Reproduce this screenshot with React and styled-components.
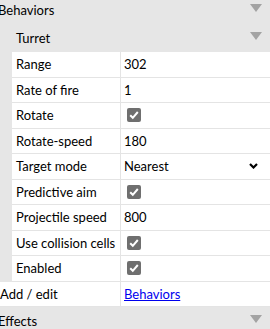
import React from "react";
import styled, { createGlobalStyle } from "styled-components";

const Global = createGlobalStyle`
  html, body { margin: 0; padding: 0; background: #e6e6e6; overflow: hidden; }
  body { font-family: Lato, "Open Sans", sans-serif; font-size: 13px; color: #000; }
`;

const Panel = styled.div`
  width: 270px;
  height: 329px;
  overflow: hidden;
  background: #e6e6e6;
  display: flex;
  flex-direction: column;
`;

const Header = styled.div`
  flex: none;
  height: 28px;
  margin-top: ${(p) => p.$offset || 0}px;
  display: flex;
  align-items: center;
  padding-left: ${(p) => p.$indent}px;
  position: relative;
  background: #e6e6e6;
`;

const HeaderText = styled.span`
  margin-left: ${(p) => p.$shift || 0}px;
`;

const Triangle = styled.span`
  position: absolute;
  right: 8px;
  top: 8px;
  width: 0;
  height: 0;
  border-left: 6px solid transparent;
  border-right: 6px solid transparent;
  border-top: 8px solid #a3a3a3;
`;

const Row = styled.div`
  flex: none;
  height: 25.5px;
  display: flex;
  padding-left: ${(p) => p.$indent}px;
  box-sizing: border-box;
`;

const Label = styled.div`
  width: ${(p) => 121 - p.$indent}px;
  flex: none;
  box-sizing: border-box;
  background: #fff;
  border-right: 1px solid #e4e4e4;
  border-bottom: 1px solid #e4e4e4;
  display: flex;
  align-items: center;
  padding-left: ${(p) => p.$pad}px;
  white-space: nowrap;
  overflow: hidden;
`;

const Value = styled.div`
  flex: 1;
  background: #fff;
  border-bottom: 1px solid #e4e4e4;
  display: flex;
  align-items: center;
  padding-left: 3px;
  padding-right: 12px;
  justify-content: space-between;
`;

const Check = styled.span`
  width: 14px;
  height: 14px;
  margin-left: 3px;
  border-radius: 2px;
  background: #6f6f6f;
  display: inline-flex;
  align-items: center;
  justify-content: center;
`;

const Link = styled.a`
  color: #0000ee;
  text-decoration: underline;
  cursor: pointer;
`;

const Checkbox = () => (
  <Check>
    <svg width="12" height="12" viewBox="0 0 12 12">
      <path d="M2.2 6.2 L4.8 8.8 L9.8 3" fill="none" stroke="#fff" strokeWidth="2" />
    </svg>
  </Check>
);

const Chevron = () => (
  <svg width="9" height="6" viewBox="0 0 9 6">
    <path d="M1 1 L4.5 4.5 L8 1" fill="none" stroke="#000" strokeWidth="2.2" />
  </svg>
);

const props = [
  ["Range", "302"],
  ["Rate of fire", "1"],
  ["Rotate", "check"],
  ["Rotate-speed", "180"],
  ["Target mode", "select"],
  ["Predictive aim", "check"],
  ["Projectile speed", "800"],
  ["Use collision cells", "check"],
  ["Enabled", "check"],
];

export default function App() {
  return (
    <Panel>
      <Global />
      <Header $offset={-4} $indent={0}>
        <HeaderText $shift={-2}>Behaviors</HeaderText>
        <Triangle />
      </Header>
      <Header $indent={16}>
        <HeaderText>Turret</HeaderText>
        <Triangle />
      </Header>
      {props.map(([k, v]) => (
        <Row key={k} $indent={12}>
          <Label $indent={12} $pad={4}>{k}</Label>
          <Value>
            {v === "check" ? (
              <Checkbox />
            ) : v === "select" ? (
              <>
                <span>Nearest</span>
                <Chevron />
              </>
            ) : (
              <span>{v}</span>
            )}
          </Value>
        </Row>
      ))}
      <Row $indent={0}>
        <Label $indent={0} $pad={0}>Add / edit</Label>
        <Value>
          <Link>Behaviors</Link>
        </Value>
      </Row>
      <Header $indent={0}>
        <HeaderText $shift={-2}>Effects</HeaderText>
        <Triangle />
      </Header>
    </Panel>
  );
}
